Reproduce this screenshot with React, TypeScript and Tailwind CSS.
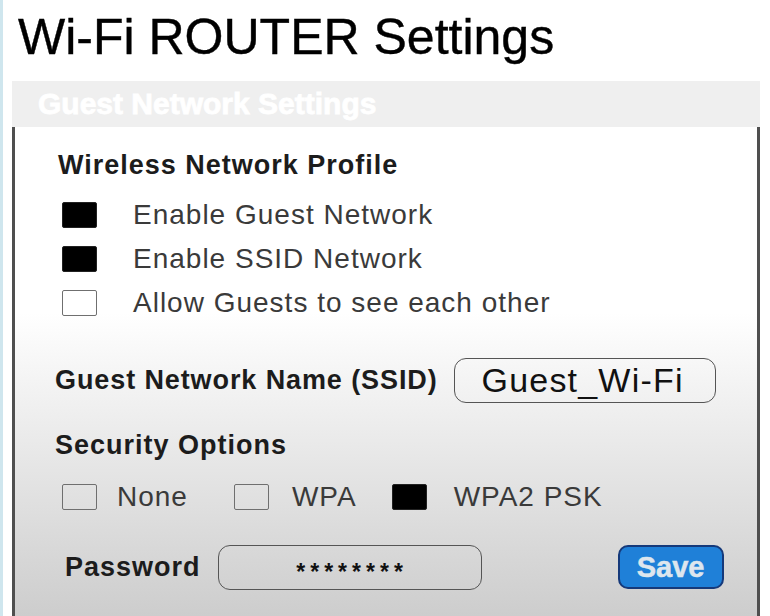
type Box = { checked: boolean };

function Check({ checked }: Box) {
  return (
    <span
      className={`block w-[35px] h-[26px] shrink-0 rounded-[2px] ${
        checked ? "bg-black border border-[#222]" : "border-[1.5px] border-[#6f6f6f]"
      }`}
    />
  );
}

const profile = [
  { label: "Enable Guest Network", checked: true },
  { label: "Enable SSID Network", checked: true },
  { label: "Allow Guests to see each other", checked: false },
];

export default function App() {
  return (
    <div
      className="w-[770px] h-[616px] overflow-hidden bg-white border-l-[3px] border-[#cfe6ee]"
      style={{ fontFamily: '"Liberation Sans", Arial, sans-serif' }}
    >
      {/* Title */}
      <div className="h-[81px] pt-[12px] pl-[15px]">
        <h1 className="text-[50px] leading-[50px] text-black [-webkit-text-stroke:0.4px_black]">
          Wi-Fi ROUTER Settings
        </h1>
      </div>

      <div className="ml-[9px] w-[748px]">
        {/* Header bar */}
        <div className="h-[46px] bg-[#efefef] flex items-center pl-[26px]">
          <span className="text-[30px] leading-[30px] font-bold text-white [-webkit-text-stroke:0.8px_white]">
            Guest Network Settings
          </span>
        </div>

        {/* Body */}
        <div className="h-[489px] border-x-[3px] border-[#4f4f4f] bg-[linear-gradient(to_bottom,#ffffff_0%,#ffffff_38%,#cdcdcd_100%)] pt-[16px]">
          <div className="h-[44px] flex items-center pl-[43px]">
            <span className="text-[27px] leading-[27px] font-bold tracking-[1px] text-[#1c1c1c]">
              Wireless Network Profile
            </span>
          </div>

          <div className="mt-[6px]">
            {profile.map((p) => (
              <div key={p.label} className="h-[44px] flex items-center pl-[47px] gap-[36px]">
                <Check checked={p.checked} />
                <span className="text-[28px] leading-[28px] tracking-[1px] text-[#3a3a3a]">
                  {p.label}
                </span>
              </div>
            ))}
          </div>

          {/* SSID */}
          <div className="mt-[30px] h-[50px] flex items-center pl-[40px]">
            <span className="text-[27px] leading-[27px] font-bold tracking-[0.9px] text-[#1c1c1c]">
              Guest Network Name (SSID)
            </span>
            <div className="ml-[16px] w-[262px] h-[45px] rounded-[12px] border-[1.5px] border-[#555] flex items-center justify-center">
              <span className="pr-[4px] text-[34px] leading-[34px] tracking-[1.2px] text-[#111]">
                Guest_Wi-Fi
              </span>
            </div>
          </div>

          {/* Security */}
          <div className="mt-[18px] h-[44px] flex items-center pl-[40px]">
            <span className="text-[27px] leading-[27px] font-bold tracking-[1px] text-[#1c1c1c]">
              Security Options
            </span>
          </div>

          <div className="mt-[8px] h-[44px] flex items-center pl-[47px] text-[28px] leading-[28px] tracking-[1px] text-[#3a3a3a]">
            <Check checked={false} />
            <span className="ml-[20px]">None</span>
            <span className="ml-[46px]">
              <Check checked={false} />
            </span>
            <span className="ml-[23px]">WPA</span>
            <span className="ml-[35px]">
              <Check checked={true} />
            </span>
            <span className="ml-[27px]">WPA2 PSK</span>
          </div>

          {/* Password */}
          <div className="mt-[23px] h-[50px] flex items-center pl-[50px]">
            <span className="text-[27px] leading-[27px] font-bold tracking-[1px] text-[#1c1c1c]">
              Password
            </span>
            <div className="ml-[17px] w-[264px] h-[45px] rounded-[12px] border-[1.5px] border-[#555] flex items-center justify-center">
              <span className="pt-[10px] pl-[5px] text-[23px] leading-[23px] font-bold tracking-[5px] text-[#111]">
                ********
              </span>
            </div>
            <button className="ml-[136px] w-[106px] h-[44px] rounded-[10px] border-2 border-[#15397a] bg-[#1f80d8] flex items-center justify-center">
              <span className="text-[29px] leading-[29px] font-bold text-[#dde6ee] [-webkit-text-stroke:0.5px_#dde6ee]">
                Save
              </span>
            </button>
          </div>
        </div>
      </div>
    </div>
  );
}
